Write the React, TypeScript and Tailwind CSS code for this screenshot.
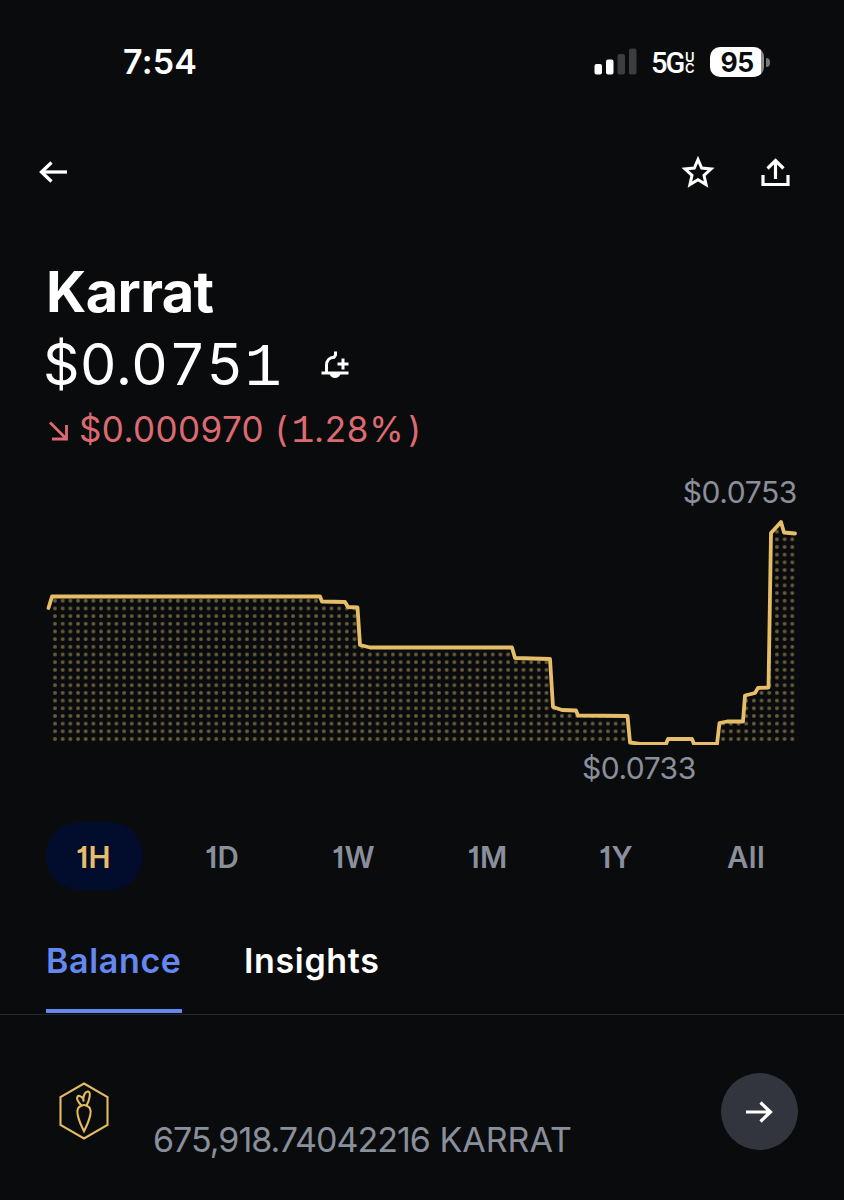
import React from 'react';
import clsx from 'clsx';

const LINE =
  '48.5,608 52,596.5 320,596.5 322,601.5 345,602 348,607 357.5,607.5 360,645 370,647.5 512,647.5 515,658 550,659 553,707 562,710 576,710.5 578,715.5 627.5,716 630,742.5 640,744 666,744 668,739 692,739 694,744 717,744 719.5,723 727,721.5 743,721.5 745,695.5 755,693 758,688 768.5,687.5 771,533 781,522 784,532.5 795,533.5';

const ranges = [
  { label: '1H', width: 'w-[97px]' },
  { label: '1D', width: 'w-[95px]' },
  { label: '1W', width: 'w-[103px]' },
  { label: '1M', width: 'w-[100px]' },
  { label: '1Y', width: 'w-[92px]' },
  { label: 'All', width: 'w-[103px]' },
];

const StatusBar = () => (
  <div className="h-[124px] flex items-center pl-[123px] pr-[75px] text-white">
    <span className="text-[34px] leading-none font-semibold tracking-[0.2px]">7:54</span>
    <div className="ml-auto flex items-center">
      <svg width="43" height="28" viewBox="0 0 43 28" className="mr-[14px]">
        <rect x="0.5" y="16" width="7.5" height="10.500" rx="2" fill="#fff" />
        <rect x="12" y="11.500" width="7.5" height="15" rx="2" fill="#fff" />
        <rect x="23.5" y="6" width="7.5" height="20.500" rx="2" fill="#3c3d3f" />
        <rect x="35" y="0.500" width="7.5" height="26" rx="2" fill="#3c3d3f" />
      </svg>
      <span className="w-[34px] mt-[3px] font-['Roboto',sans-serif] text-[29px] leading-none font-medium tracking-[-2px]">5G</span>
      <span className="flex flex-col w-[11px] mt-px mr-[14px] text-[13px] leading-[11px] font-semibold">
        <span>U</span>
        <span>C</span>
      </span>
      <span className="w-[54px] h-[30px] rounded-[10px] bg-linear-to-r from-white from-95% to-[#8b8c8d] to-95% flex items-center justify-center text-[26.5px] leading-none font-bold tracking-[-0.5px] text-[#0a0b0d]">
        95
      </span>
      <span className="w-[4px] h-[9px] ml-[2px] -mr-px rounded-r-full bg-[#77787a]" />
    </div>
  </div>
);

const Toolbar = () => (
  <div className="h-24 flex items-center pl-[39px] pr-[54.5px] text-white">
    <svg width="29" height="22" viewBox="0 0 29 22" fill="none" stroke="currentColor" strokeWidth="3.3">
      <path d="M28 11H3" />
      <path d="M12.5 1.5L2.5 11l10 9.5" />
    </svg>
    <svg width="34" height="34" viewBox="0 0 34 34" fill="none" stroke="currentColor" strokeWidth="3" className="ml-auto">
      <path d="M17 4.500l3.700 8.600 9.300.9-7 6.300 2.100 9.300-8.100-4.800-8.100 4.800 2.100-9.300-7-6.300 9.300-.9z" />
    </svg>
    <svg width="30" height="30" viewBox="0 0 30 30" fill="none" stroke="currentColor" strokeWidth="3.2" className="ml-[44.5px]">
      <path d="M15.5 22V3.5M7.5 11.500l8-8 8 8" />
      <path d="M3 18v9.5h25V18" />
    </svg>
  </div>
);

const BellPlus = () => (
  <svg width="30" height="30" viewBox="0 0 30 30" fill="none" stroke="currentColor" strokeWidth="3" className="-mt-px">
    <path d="M1.500 24h27" />
    <path d="M6.500 24v-7.500c0-5 3-8 7.500-8.200L15.500 6V2.500" />
    <path d="M23 9.500v11M17.500 15h11" />
    <path d="M9.500 25h11c-1 2.500-3 4-5.500 4s-4.500-1.500-5.500-4z" fill="currentColor" stroke="none" />
  </svg>
);

const PriceChart = () => (
  <svg width="844" height="237" viewBox="0 508 844 237" className="block">
    <defs>
      <pattern id="dots" x="51.160" y="735.160" width="7.680" height="7.680" patternUnits="userSpaceOnUse">
        <circle cx="3.840" cy="3.840" r="1.950" fill="#675b3b" />
      </pattern>
      <clipPath id="plot">
        <rect x="52" y="508" width="743" height="237" />
      </clipPath>
    </defs>
    <polygon points={`${LINE} 795,744 48.5,744`} fill="url(#dots)" clipPath="url(#plot)" />
    <polyline points={LINE} fill="none" stroke="#e6be69" strokeWidth="3.8" strokeLinejoin="round" strokeLinecap="round" />
  </svg>
);

const KarratLogo = () => (
  <svg width="52" height="60" viewBox="58 1081 52 60" fill="none" stroke="#e2bb62" strokeWidth="2.1" className="-mt-[2px]">
    <path d="M84 1083.500l23.500 13.700v27.600l-23.500 13.700-23.500-13.700v-27.600z" />
    <path d="M81.500 1105.800c1.500-.9 3.500-.9 5 0 4 1.200 4.600 5.200 3.800 9-1 5-3.500 11-6.300 16.500-2.800-5.500-5.300-11.500-6.300-16.500-.8-3.800-.2-7.800 3.800-9z" />
    <path d="M81.500 1105.500c-2.500-2.500-5-5.500-4.300-8.200.8-2.500 4-1.500 6 1.700.3-3.800 2.300-8 5-7.400 3 .8 1.300 8.500-1.700 13.900M83.200 1099l.5 2.500" />
  </svg>
);

const App = () => {
  return (
    <div className="w-[844px] h-[1200px] overflow-hidden bg-[#0a0b0d] font-['Inter',sans-serif]">
      <StatusBar />
      <Toolbar />

      <div className="pl-[46px] pr-[46px]">
        <h1 className="mt-[40px] text-[56px] leading-[64px] font-bold tracking-[-0.6px] text-white">Karrat</h1>
        <div className="mt-[4px] h-[72px] flex items-center text-white">
          <span className="w-[277px] -ml-[3px] pt-[2px] text-[57px] leading-[72px] tracking-[0.8px] whitespace-nowrap">
            $0.0<span className="ml-[3px] tracking-[4px]">75</span>
            <span className="-ml-px font-['Liberation_Mono',monospace] text-[62px] leading-none">1</span>
          </span>
          <BellPlus />
        </div>
        <div className="mt-[9px] h-[40px] flex items-center text-[#dc6a70]">
          <svg width="22" height="22" viewBox="0 0 22 22" fill="none" stroke="currentColor" strokeWidth="2.8" className="ml-[2px] mt-1 mr-[9px]">
            <path d="M2 2.500l17 17M4 19H18.500V5" />
          </svg>
          <span className="text-[35px] leading-[40px] tracking-[0.4px] whitespace-nowrap">$0.000970</span>
          <span className="ml-[11px] pt-px text-[35px] leading-[40px] tracking-[0.7px] whitespace-nowrap">
            (<span className="ml-[3px] font-['Liberation_Mono',monospace] text-[38px] leading-none">1</span>
            <span className="-ml-px">.28%</span>
            <span className="ml-[4px]">)</span>
          </span>
        </div>
        <div className="mt-[27px] pr-px text-right text-[30px] leading-8 tracking-[-0.4px] text-[#8a8f9c]">$0.0753</div>
      </div>

      <PriceChart />
      <div className="mt-[7px] pl-[582px] text-[30px] leading-8 tracking-[-0.5px] text-[#8a8f9c]">$0.0733</div>

      <div className="mt-[38px] pl-[46px] flex gap-[32.5px]">
        {ranges.map(({ label, width }, i) => (
          <button
            key={label}
            className={clsx(
              "shrink-0 h-[68px] pt-[3px] pr-[2px] rounded-full text-[29.5px] leading-none font-semibold tracking-[0.3px] [font-feature-settings:'cv01']",
              width,
              i === 0 ? 'bg-[#020d2d] text-[#e6be69]' : 'text-[#8a8f9c]'
            )}
          >
            {label}
          </button>
        ))}
      </div>

      <div className="pt-[51px] pl-[46px] flex gap-[62px] border-b border-[#25272b] text-[34px] leading-[40px] font-semibold tracking-[0.65px]">
        <div className="w-[136px] pb-[28px] mb-px border-b-4 border-[#6488f2] text-[#6488f2]">Balance</div>
        <div className="text-white">Insights</div>
      </div>

      <div className="mt-[58px] pl-[58px] pr-[46px] h-[77px] flex items-center">
        <KarratLogo />
        <div className="ml-[43px] pt-[56px] text-[34px] leading-[40px] text-[#8a8f9c] whitespace-nowrap">
          <span className="tracking-[-1px]">675,918.74042216</span> KARRAT
        </div>
        <div className="ml-auto size-[77px] shrink-0 rounded-full bg-[#32353d] flex items-center justify-center text-white">
          <svg width="29" height="22" viewBox="0 0 29 22" fill="none" stroke="currentColor" strokeWidth="3.200">
            <path d="M1 11h25M15.500 1.500l10 9.500-10 9.500" />
          </svg>
        </div>
      </div>
    </div>
  );
};

export default App;
